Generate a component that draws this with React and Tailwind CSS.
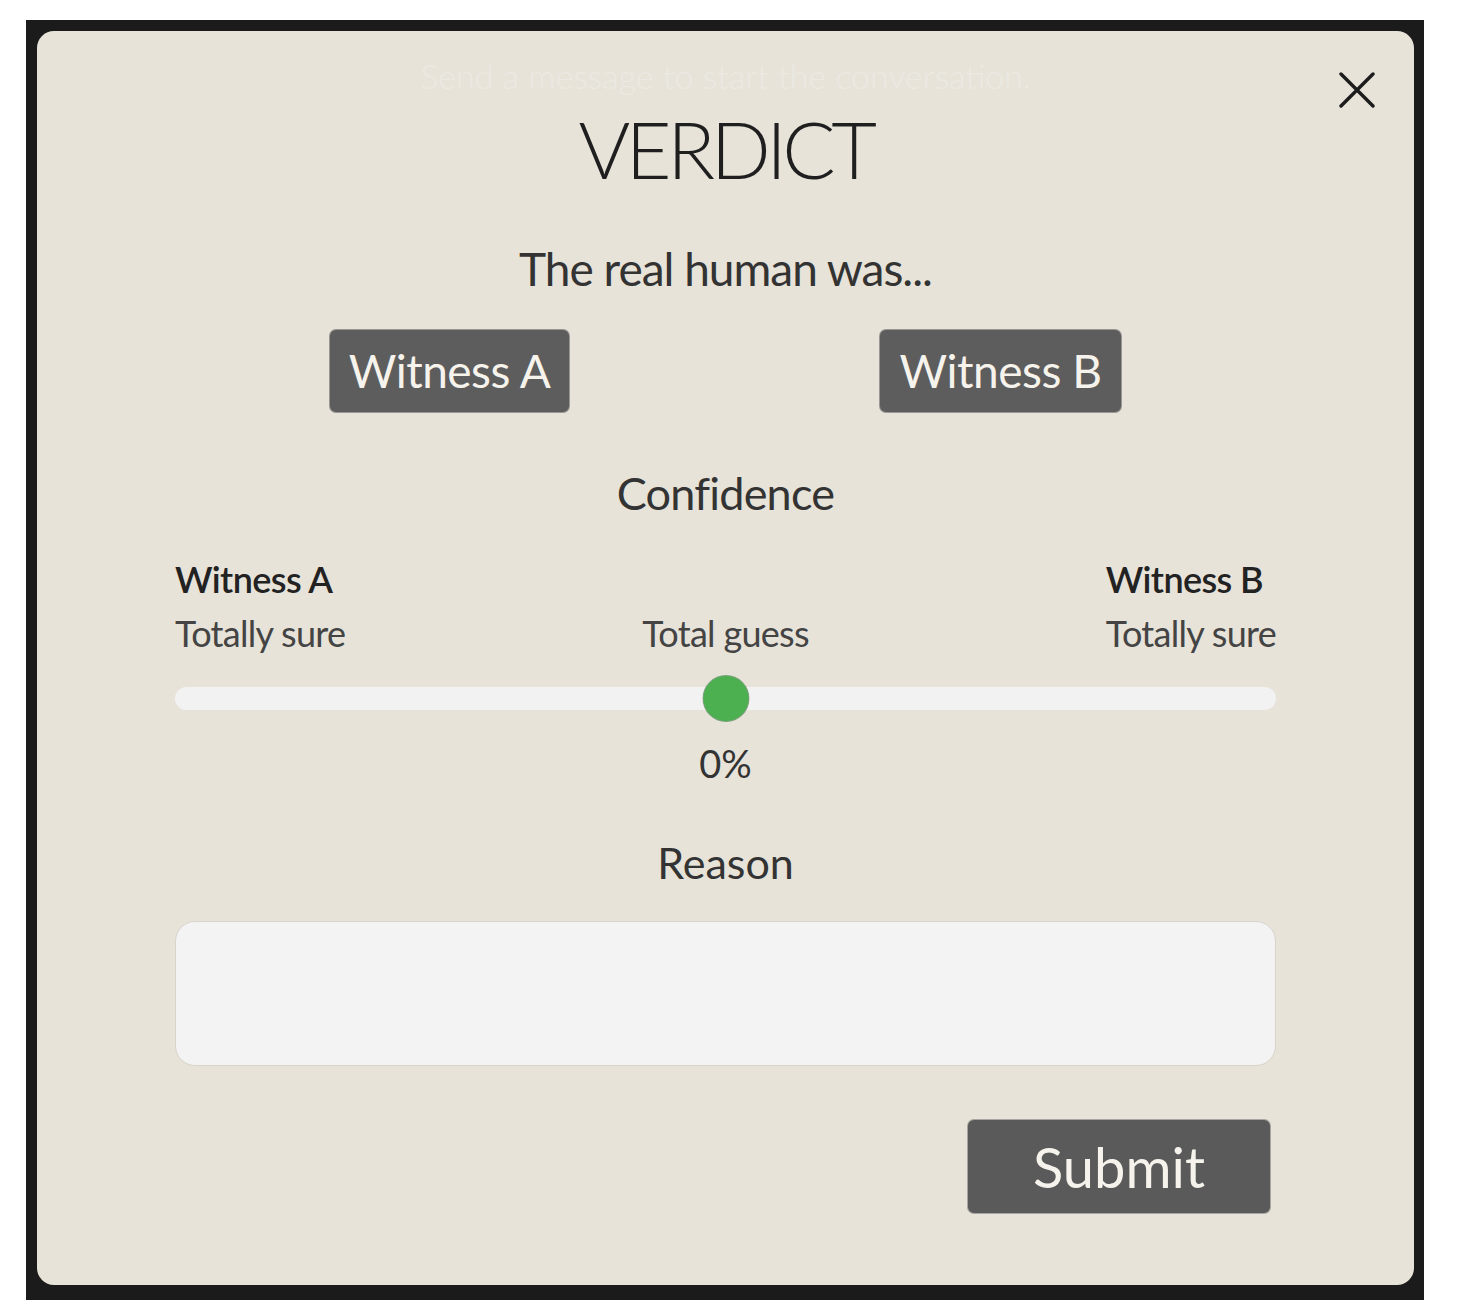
import React, { useState } from 'react';

function CloseIcon() {
  return (
    <svg width="36" height="36" viewBox="0 0 36 36" fill="none">
      <path d="M2 2 L34 34 M34 2 L2 34" stroke="#1c1c1c" strokeWidth="3.4" strokeLinecap="round" />
    </svg>
  );
}

function WitnessButton({ label, width }) {
  return (
    <button className={`${width} h-[84px] rounded-[7px] bg-[#5d5d5d] border border-[#f2efe8]/40 text-[#f6f3ec] text-[46px] tracking-[-0.5px] leading-none`}>
      {label}
    </button>
  );
}

export default function App() {
  const [reason, setReason] = useState('');

  return (
    <div className="w-[1470px] h-[1310px] bg-white pt-[20px] pl-[26px] font-['Lato','Open_Sans',sans-serif]">
      <div className="w-[1398px] h-[1280px] bg-[#1b1b1b] pt-[11px] pl-[11px]">
        <div className="relative w-[1377px] h-[1254px] rounded-[17px] bg-[#e7e3d9] px-[138px] pt-[78px] flex flex-col items-center text-[#333]">
          {/* chat placeholder showing through the modal */}
          <p className="absolute top-[28px] left-0 right-0 text-center text-[34px] leading-none text-[#ece9e2] font-light">
            Send a message to start the conversation.
          </p>
          <button className="absolute top-[41px] left-[1302px]">
            <CloseIcon />
          </button>

          <h1 className="text-[79px] tracking-[-4.5px] leading-none font-light text-[#1f1f1f]">VERDICT</h1>
          <p className="mt-[58px] text-[46px] tracking-[-1px] leading-none text-[#333]">The real human was...</p>

          <div className="mt-[37px] flex gap-[309px]">
            <WitnessButton label="Witness A" width="w-[241px]" />
            <WitnessButton label="Witness B" width="w-[243px]" />
          </div>

          <p className="mt-[58px] text-[45px] tracking-[-0.8px] leading-none text-[#333]">Confidence</p>

          <div className="mt-[45px] w-full grid grid-cols-3 text-[36px] leading-none">
            <div className="justify-self-start">
              <div className="font-semibold tracking-[-0.6px] text-[#222]">Witness A</div>
              <div className="mt-[18px] tracking-[-0.7px] text-[#444]">Totally sure</div>
            </div>
            <div className="text-center">
              <div className="invisible">Witness</div>
              <div className="mt-[18px] tracking-[-0.7px] text-[#444]">Total guess</div>
            </div>
            <div className="justify-self-end">
              <div className="font-semibold tracking-[-0.6px] text-[#222]">Witness B</div>
              <div className="mt-[18px] tracking-[-0.7px] text-[#444]">Totally sure</div>
            </div>
          </div>

          <div className="relative mt-[24px] w-full h-[47px] flex items-center">
            <div className="w-full h-[23px] rounded-full bg-[#f2f2f2]" />
            <div className="absolute left-1/2 top-0 -translate-x-1/2 w-[47px] h-[47px] rounded-full bg-[#4caf50] border border-[#9a9a9a]/60" />
          </div>

          <p className="mt-[22px] text-[38px] leading-none text-[#333]">0%</p>

          <p className="mt-[59px] text-[43px] leading-none text-[#333]">Reason</p>

          <textarea
            value={reason}
            onChange={(e) => setReason(e.target.value)}
            className="mt-[37px] w-full h-[145px] rounded-[20px] bg-[#f3f3f3] border border-[#d8d4ca] resize-none outline-none p-4 text-[30px]"
          />

          <div className="mt-[53px] w-full flex justify-end pr-[5px]">
            <button className="w-[304px] h-[95px] rounded-[7px] bg-[#5a5a5a] border border-[#f2efe8]/50 text-[#f6f3ec] text-[56px] leading-none">
              Submit
            </button>
          </div>
        </div>
      </div>
    </div>
  );
}
